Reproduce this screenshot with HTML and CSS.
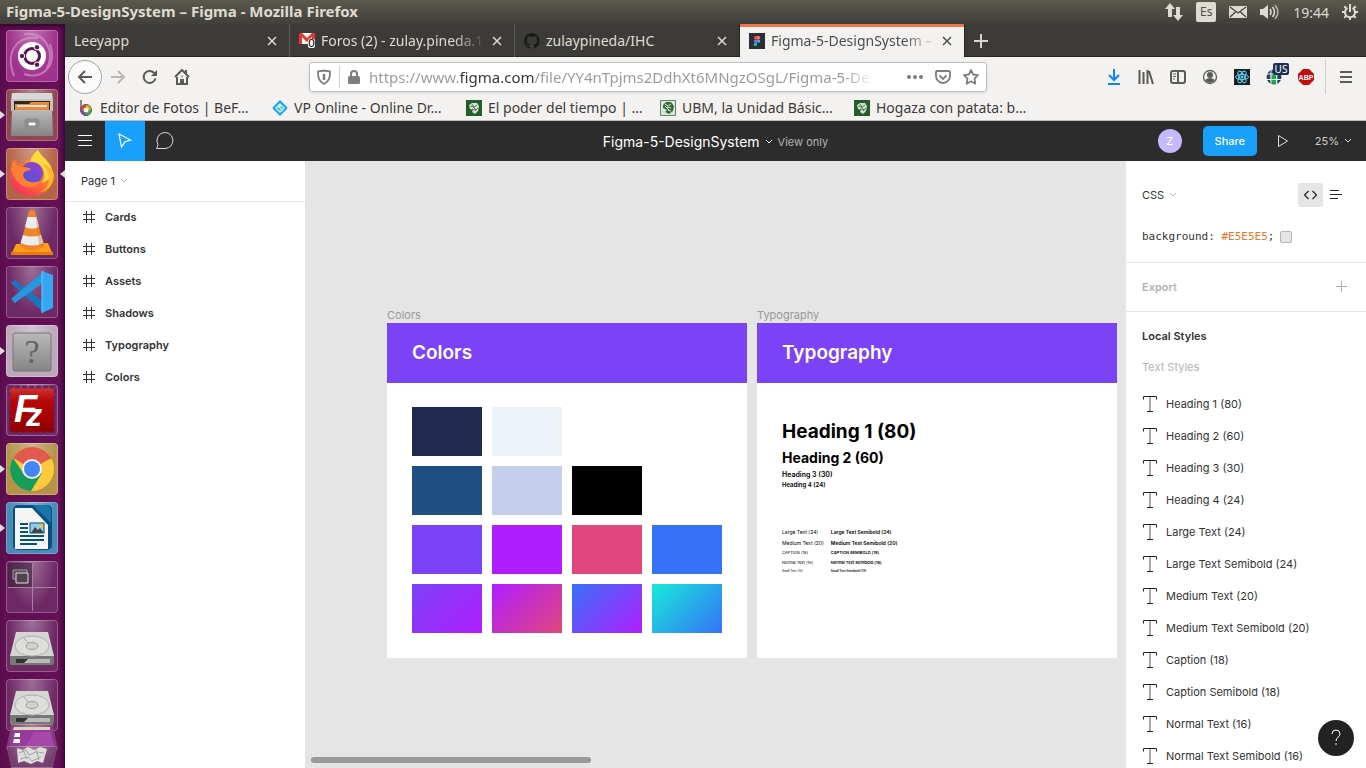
FILE: index.html
```html
<!DOCTYPE html>
<html lang="es">
<head>
<meta charset="utf-8">
<title>Figma-5-DesignSystem – Figma</title>
<link rel="stylesheet" href="styles.css">
</head>
<body>
<header class="panel">
  <span class="panel-title">Figma-5-DesignSystem – Figma - Mozilla Firefox</span>
  <div class="indicators">
    <svg width="18" height="18" viewBox="0 0 18 18" fill="#dfdbd2"><path d="M5 0l5 6H7v8H3V6H0zM13 18l-5-6h3V4h4v8h3z"/></svg>
    <span class="lang">Es</span>
    <svg width="18" height="12" viewBox="0 0 18 12"><rect width="18" height="12" rx="1" fill="#dfdbd2"/><path d="M1 1l8 6 8-6M1 11l5.500-5M17 11l-5.500-5" fill="none" stroke="#45433e" stroke-width="1.300"/></svg>
    <svg width="20" height="16" viewBox="0 0 20 16"><path d="M0 5h3l5-4v14l-5-4H0z" fill="#dfdbd2"/><g fill="none" stroke="#dfdbd2" stroke-width="1.600"><path d="M10 5q2 3 0 6M12.500 3q4 5 0 10" /><path d="M15 1q6 7 0 14" stroke="#b5b1a9"/></g></svg>
    <time>19:44</time>
    <svg width="16" height="16" viewBox="0 0 16 16" fill="none" stroke="#dfdbd2"><path d="M5.500 4a5 5 0 1 0 5 0" stroke-width="2"/><path d="M8 0v8" stroke-width="2"/><path d="M2.300 2.300l2 2M13.700 2.300l-2 2M0 8h3M16 8h-3M2.300 13.700l2-2M13.700 13.700l-2-2M8 16v-3" stroke-width="2"/></svg>
  </div>
</header>
<div class="desktop">
  <nav class="launcher" aria-label="Launcher">
    <button class="tile dash" aria-label="Dash"><svg viewBox="0 0 52 52"><path d="M8 46C-1 22 10 6 32 8M18 4c22-2 32 18 22 36M44 14c8 24-10 36-26 30" fill="none" stroke="#d9a0cd" stroke-width="2" opacity=".6"/><circle cx="26" cy="26" r="14" fill="#fff"/><circle cx="26" cy="26" r="7.500" fill="none" stroke="#5c1550" stroke-width="3"/><g fill="#5c1550" stroke="#fff"><circle cx="16" cy="26" r="2.700"/><circle cx="31" cy="17.300" r="2.700"/><circle cx="31" cy="34.700" r="2.700"/></g></svg></button>
    <button class="tile files running" aria-label="Files"><svg viewBox="0 0 52 52"><path d="M6 4h40l1 8H5z" fill="#d8d8d8"/><path d="M5 10h42v12H5z" fill="#c4c4c4"/><path d="M8 12h36v10H8z" fill="#36251c"/><path d="M9 15h14l2-2h18v9H9z" fill="#e68a42"/><path d="M11 17h30" stroke="#fff" stroke-width="1.500"/><path d="M6 21h40l1 26H5z" fill="url(#metal)"/><rect x="20" y="31" width="12" height="8" rx="2" fill="#eee" stroke="#8d8d8d" stroke-width="3"/><rect x="22" y="33" width="8" height="4" fill="#fff" stroke="#666"/></svg></button>
    <button class="tile fox running active" aria-label="Firefox"><svg viewBox="0 0 52 52"><path d="M32 2c1 4 5 6 9 11 10 12 9 33-15 35C11 48 4 38 4 26c0-5 2-10 6-15l1 4 7 1c2-4 3-5 6-5z" fill="url(#fire)"/><path d="M32 2c-6 5-8 9-7 13q8-1 12 6 4 8-2 14 10-2 11-12c0-8-10-13-14-21z" fill="#ffdb3d"/><path d="M36 16q8 7 7 16-1 9-9 12 13-2 14-17-1-9-12-11z" fill="#ffb529"/><circle cx="26" cy="25" r="11" fill="url(#globe)"/><path d="M7 12q3 7 10 7c4 0 7 1 8 2-4 3-7 1-8 6 1 6 8 9 17 6-4 8-14 9-21 2-7-6-9-14-6-23z" fill="#ff8034"/></svg></button>
    <button class="tile dark" aria-label="VLC"><svg viewBox="0 0 52 52"><path d="M10 37l32-1 5 12H5z" fill="#ff9f17"/><path d="M5 45h42v3H5z" fill="#ed7a0c"/><path d="M23 4q3-2 6 0l9 36q-12 7-24 0z" fill="#f0862a"/><path d="M21.500 10h9l2.500 10q-7 3-14 0zM17 28q9 3 18 0l2.500 8q-11 5-23 0z" fill="#e9edf0"/><path d="M29 4l4 34 5 2z" fill="#d96a12" opacity=".35"/></svg></button>
    <button class="tile dark" aria-label="Visual Studio Code"><svg viewBox="0 0 52 52"><path d="M5 17l4-3 29 22v11z" fill="#1b75bf"/><path d="M5 33l4 4 29-21V5z" fill="#2697dc"/><path d="M36 5l11 4v33l-11 5z" fill="#35a6f2"/><path d="M36 5v42" stroke="#74c7ff"/></svg></button>
    <button class="tile unknown running" aria-label="Unknown application"><svg viewBox="0 0 52 52"><rect x="7" y="8" width="38" height="38" rx="2" fill="url(#metal)" stroke="#777"/><text x="26" y="38" text-anchor="middle" class="question">?</text></svg></button>
    <button class="tile zilla" aria-label="FileZilla"><svg viewBox="0 0 52 52"><rect x="3" y="3" width="46" height="46" fill="url(#red)" stroke="#6b2563" stroke-width="3" stroke-dasharray="3 4" stroke-linecap="round"/><text x="8" y="38" class="zilla-f">F<tspan x="20" y="42" class="zilla-z">z</tspan></text></svg></button>
    <button class="tile gold running" aria-label="Chrome"><svg viewBox="0 0 52 52"><circle cx="26" cy="26" r="22" fill="#fdc93d"/><path d="M26 26L7 15A22 22 0 0 1 45 15z" fill="#e25a4d"/><path d="M7 15a22 22 0 0 0 18 33l11-18-18 1z" fill="#159d59"/><path d="M26 16h19.500L44 13H20z" fill="#e25a4d"/><circle cx="26" cy="26" r="10" fill="#f1f1f1"/><circle cx="26" cy="26" r="8" fill="#4385f4"/></svg></button>
    <button class="tile writer running" aria-label="Writer"><svg viewBox="0 0 52 52"><rect x="7" y="3" width="39" height="45" rx="5" fill="#08517e"/><path d="M9 6h17l16 17v24H9z" fill="#f5f5f5"/><path d="M27 3h11q7 0 7 7v11z" fill="#1b75aa"/><path d="M14 22h8M14 26h8M14 30h8M14 34h24M14 38h24M14 42h17" stroke="#08517e" stroke-width="2"/><rect x="24" y="21" width="14" height="10" fill="#8fcdf0" stroke="#08517e"/><path d="M25 31l4-6 3 3 2-2 4 5z" fill="#444"/><circle cx="35" cy="24" r="2" fill="#f1c232"/></svg></button>
    <button class="tile dark" aria-label="Workspaces"><svg viewBox="0 0 52 52"><path d="M2 2h24v24H2z" fill="#38203a" opacity=".6"/><path d="M2 26.500h48M26.500 2v48" fill="none" stroke="#a77e9f"/><path d="M7 9h14v9H7z" fill="#5c4b59" stroke="#a39aa2"/><path d="M10 12h12v10H10z" fill="#51424f" stroke="#ddd"/></svg></button>
    <button class="tile dark" aria-label="Disk"><svg viewBox="0 0 52 52"><use href="#drive"/></svg></button>
    <button class="tile dark" aria-label="Disk"><svg viewBox="0 0 52 52"><use href="#drive"/></svg></button>
    <button class="tile fold screen" aria-label="Removable media"><svg viewBox="0 0 52 26"><path d="M8 3h36l5 19H3z" fill="#9a3a9f"/><path d="M8 3h36v3H7z" fill="#dad5bd"/><path d="M9 9h5v4H8zM8 15h6v4H7z" fill="#fff"/><path d="M28 8h16l4 14H20z" fill="#b453b1" opacity=".5"/></svg></button>
    <button class="tile fold trash" aria-label="Trash"><svg viewBox="0 0 52 22"><path d="M11 2l6 2 5-3 6 3 6-3 7 2-4 14-6-2-6 3-7-3-6 2z" fill="#dedede"/><path d="M13 7l7-3 3 5 7-3 8 1M14 13l8-2 4 4 9-4M17 4l4 9M30 3l3 11" fill="none" stroke="#a5a5a5"/></svg></button>
  </nav>
  <div class="browser">
    <div class="tabs">
      <div class="tab"><button class="tab-name">Leeyapp</button><button class="close" aria-label="Close tab"><svg viewBox="0 0 10 10"><path d="M1 1l8 8M9 1L1 9"/></svg></button></div>
      <div class="tab"><svg width="16" height="17" viewBox="0 0 16 17"><path d="M0 1h16v11H0z" fill="#f5f5f5"/><path d="M0 12V1h3l5 5 5-5h3v11h-3V5L8 10 3 5v7z" fill="#dc3a33"/><rect x="9" y="7" width="7" height="9" rx="2" fill="#fff"/><text x="12.500" y="15" text-anchor="middle" class="mail-count">0</text></svg><button class="tab-name faded">Foros (2) - zulay.pineda.1</button><button class="close" aria-label="Close tab"><svg viewBox="0 0 10 10"><path d="M1 1l8 8M9 1L1 9"/></svg></button></div>
      <div class="tab"><svg width="16" height="16" viewBox="0 0 16 16"><path fill="#1b1b1c" d="M8 0C3.600 0 0 3.600 0 8c0 3.500 2.300 6.500 5.500 7.600.4.100.5-.2.500-.4v-1.400c-2.200.5-2.700-1-2.700-1-.4-.9-.9-1.200-.9-1.200-.7-.5.100-.5.100-.5.800.1 1.200.8 1.200.8.700 1.300 1.900.9 2.300.7.100-.5.300-.9.500-1.100-1.800-.2-3.600-.9-3.600-4 0-.9.300-1.600.8-2.200-.1-.2-.4-1 .1-2.100 0 0 .7-.2 2.200.8a7.700 7.700 0 0 1 4 0c1.500-1 2.200-.8 2.200-.8.400 1.100.2 1.900.1 2.100.5.600.8 1.300.8 2.200 0 3.100-1.900 3.700-3.700 3.900.3.300.6.800.6 1.500v2.200c0 .2.100.5.500.4A8 8 0 0 0 8 0z"/></svg><button class="tab-name">zulaypineda/IHC</button><button class="close" aria-label="Close tab"><svg viewBox="0 0 10 10"><path d="M1 1l8 8M9 1L1 9"/></svg></button></div>
      <div class="tab current"><svg width="16" height="16" viewBox="0 0 16 16"><path d="M0 0h16v16H0z" fill="#2c2d35"/><path d="M8 3H6.500a1.700 1.700 0 0 0 0 3.400H8z" fill="#f24e1e"/><path d="M8 3h1.500a1.700 1.700 0 0 1 0 3.400H8z" fill="#ff7262"/><path d="M8 6.400H6.500a1.700 1.700 0 0 0 0 3.400H8z" fill="#a259ff"/><circle cx="9.600" cy="8.100" r="1.700" fill="#1abcfe"/><path d="M8 9.800H6.500A1.700 1.700 0 1 0 8 11.500z" fill="#0acf83"/></svg><button class="tab-name faded">Figma-5-DesignSystem –</button><button class="close" aria-label="Close tab"><svg viewBox="0 0 10 10"><path d="M1 1l8 8M9 1L1 9"/></svg></button></div>
      <button class="new-tab" aria-label="New tab"><svg width="14" height="14" viewBox="0 0 14 14"><path d="M7 0v14M0 7h14" stroke="#d5d3cf" stroke-width="2"/></svg></button>
    </div>
    <div class="navbar">
      <button class="back" aria-label="Back"><svg width="16" height="16" viewBox="0 0 16 16"><path d="M15 8H2M8 2L2 8l6 6"/></svg></button>
      <button class="tool pale" aria-label="Forward"><svg width="16" height="16" viewBox="0 0 16 16"><path d="M1 8h13M8 2l6 6-6 6"/></svg></button>
      <button class="tool" aria-label="Reload"><svg width="16" height="16" viewBox="0 0 16 16"><path d="M13.500 9.500A6 6 0 1 1 12 3.700L14 6"/><path d="M15 1v6H9z" fill="#5b5b5a" stroke="none"/></svg></button>
      <button class="tool" aria-label="Home"><svg width="16" height="16" viewBox="0 0 16 16"><path d="M1 8l7-7 7 7M3 8v7h10V8"/><path d="M7 15v-4h2v4M7.500 7.500h1M12 1v4"/></svg></button>
      <div class="address">
        <svg width="16" height="16" viewBox="0 0 16 16" fill="none" stroke="#7d7d7d" stroke-width="1.800"><path d="M8 1.500l6 1c0 6-.5 9.500-6 12.500-5.500-3-6-6.500-6-12.500z"/><path d="M8 5v6" stroke-width="2.500"/></svg>
        <span class="rule"></span>
        <svg class="lock" width="14" height="16" viewBox="0 0 14 16"><rect x="1" y="7" width="12" height="8" rx="1.500" fill="#7d7d7d"/><path d="M4 8V5q0-3 3-3t3 3v3" fill="none" stroke="#7d7d7d" stroke-width="2"/></svg>
        <input class="url" aria-label="Address" value="https://www.figma.com/file/YY4nTpjms2DdhXt6MNgzOSgL/Figma-5-DesignSystem">
        <button class="mini" aria-label="Page actions"><svg width="16" height="16" viewBox="0 0 16 16" fill="#7d7d7d"><circle cx="2" cy="8" r="2"/><circle cx="8" cy="8" r="2"/><circle cx="14" cy="8" r="2"/></svg></button>
        <button class="mini" aria-label="Save to Pocket"><svg width="16" height="16" viewBox="0 0 16 16" fill="none" stroke="#7d7d7d" stroke-width="1.800"><path d="M2 2h12q1 0 1 1v4a7 7 0 0 1-14 0V3q0-1 1-1z"/><path d="M4.500 6.500L8 10l3.500-3.500"/></svg></button>
        <button class="mini" aria-label="Bookmark"><svg width="16" height="16" viewBox="0 0 16 16" fill="none" stroke="#7d7d7d" stroke-width="1.800" stroke-linejoin="round"><path d="M8 1l2.100 4.500 4.900.7-3.500 3.500.8 5L8 12.300l-4.300 2.400.8-5L1 6.200l4.900-.7z"/></svg></button>
      </div>
      <button class="tool download" aria-label="Downloads"><svg width="16" height="16" viewBox="0 0 16 16"><path d="M8 0v11M3 6l5 5 5-5M2 15h12"/></svg></button>
      <button class="tool" aria-label="Library"><svg width="16" height="16" viewBox="0 0 16 16"><path d="M1.500 1v14M5.500 3v12M9.500 1v14M11 2l4 13"/></svg></button>
      <button class="tool" aria-label="Sidebars"><svg width="16" height="16" viewBox="0 0 16 16"><rect x="1" y="2" width="14" height="12" rx="2"/><path d="M8 2v12"/><path d="M3 5h3M3 7.500h3M3 10h2" stroke-width="1"/></svg></button>
      <button class="tool" aria-label="Account"><svg width="16" height="16" viewBox="0 0 16 16"><circle cx="8" cy="8" r="6.500" stroke-width="1.300"/><circle cx="8" cy="6" r="3" fill="#5b5b5a" stroke="none"/><path d="M3 11q5-4 10 0-2 3-5 3t-5-3z" fill="#5b5b5a" stroke="none"/></svg></button>
      <button class="tool" aria-label="React Developer Tools"><svg width="16" height="16" viewBox="0 0 16 16"><path d="M0 0h16v16H0z" fill="#1b1d20" stroke="none"/><g stroke="#5ed3f3" stroke-width="1"><ellipse cx="8" cy="8" rx="6.500" ry="2.600"/><ellipse cx="8" cy="8" rx="6.500" ry="2.600" transform="rotate(60 8 8)"/><ellipse cx="8" cy="8" rx="6.500" ry="2.600" transform="rotate(120 8 8)"/></g><circle cx="8" cy="8" r="1.500" fill="#5ed3f3" stroke="none"/></svg></button>
      <button class="tool vpn" aria-label="VPN"><svg width="16" height="16" viewBox="0 0 16 16"><circle cx="8" cy="8" r="7.500" fill="#29405f" stroke="none"/><path d="M4 5h8v9l-4 1-4-2z" fill="#23a452" stroke="none"/><path d="M1 5h14M1 10.500h14M5 1v14M10.500 1v14" stroke="#e8f2ec" stroke-width="1"/></svg><span class="badge">US</span></button>
      <button class="tool" aria-label="Adblock Plus"><svg width="16" height="16" viewBox="0 0 16 16"><path d="M5 0h6l5 5v6l-5 5H5l-5-5V5z" fill="#c70d0b" stroke="none"/><text x="8" y="10.500" text-anchor="middle" class="abp">ABP</text></svg></button>
      <button class="app-menu" aria-label="Menu"><svg width="12" height="14" viewBox="0 0 12 14"><path d="M0 2h12M0 7h12M0 12h12" stroke="#5b5b5a" stroke-width="2"/></svg></button>
    </div>
    <nav class="bookmarks" aria-label="Bookmarks">
      <a href="#befunky"><svg width="16" height="16" viewBox="0 0 16 16"><path d="M3 0v9" stroke="#888" stroke-width="2"/><circle cx="8" cy="10" r="4" fill="#fff" stroke="#eab308" stroke-width="3"/><path d="M4 10a4 4 0 0 1 4-4" fill="none" stroke="#e5462f" stroke-width="3"/><path d="M12 10a4 4 0 0 1-4 4" fill="none" stroke="#42b050" stroke-width="3"/><path d="M8 14a4 4 0 0 1-4-4" fill="none" stroke="#734bbd" stroke-width="3"/><circle cx="8" cy="10" r="5.500" fill="none" stroke="#555"/></svg>Editor de Fotos | BeF…</a>
      <a href="#vp"><svg width="16" height="16" viewBox="0 0 16 16"><path d="M8 0l7 7q1 1 0 2l-7 7-7-7q-1-1 0-2z" fill="#19a8dc"/><path d="M4 8l4-4 4 4-4 4zM6 6l5 5M8 4v4" fill="none" stroke="#c8f0ff" stroke-width="1.500"/></svg>VP Online - Online Dr…</a>
      <a href="#tiempo"><svg width="16" height="16"><use href="#leaf"/></svg>El poder del tiempo | …</a>
      <a href="#ubm"><svg width="16" height="16" viewBox="0 0 16 16"><path d="M.5.5h15v15H.5z" fill="#dce7dc" stroke="#61816a"/><path d="M3 5l3-3 5 0 3 4-1 5-4 3-4-2 2-2-4-2z" fill="#356a3d"/><path d="M5 4l3 2 3-2M7 7l4 1M8 10l3 1M5 6l4 4" fill="none" stroke="#dce7dc"/></svg>UBM, la Unidad Básic…</a>
      <a href="#hogaza"><svg width="16" height="16"><use href="#leaf"/></svg>Hogaza con patata: b…</a>
    </nav>
    <main class="figma">
      <header class="toolbar">
        <div class="toolbar-left">
          <button aria-label="Main menu"><svg width="14" height="12" viewBox="0 0 14 12"><path d="M0 .5h14M0 5.500h14M0 10.500h14" stroke="#fff"/></svg></button>
          <button class="selected" aria-label="Move"><svg width="16" height="18" viewBox="0 0 16 18"><path d="M2 2l11.500 6-5.500 1.800L4.500 15z" fill="none" stroke="#fff" stroke-width="1.200"/></svg></button>
          <button aria-label="Comment"><svg width="20" height="18" viewBox="0 0 20 18"><path d="M1.500 16.500Q3 14 3 12.500A8 8 0 1 1 10 16.500z" fill="none" stroke="#ddd"/></svg></button>
        </div>
        <div class="file"><span class="file-name">Figma-5-DesignSystem</span><svg width="8" height="6" viewBox="0 0 8 6"><path d="M1 1l3 3 3-3" fill="none" stroke="#fff"/></svg><span class="view-only">View only</span></div>
        <div class="toolbar-right">
          <span class="avatar">Z</span>
          <button class="share">Share</button>
          <button class="play" aria-label="Present"><svg width="12" height="14" viewBox="0 0 12 14"><path d="M1.500 1.500l9 5.500-9 5.500z" fill="none" stroke="#ddd"/></svg></button>
          <button class="zoom">25%<svg width="8" height="6" viewBox="0 0 8 6"><path d="M1 1l3 3 3-3" fill="none" stroke="#ddd"/></svg></button>
        </div>
      </header>
      <div class="workspace">
        <aside class="layers">
          <button class="page">Page 1<svg width="8" height="6" viewBox="0 0 8 6"><path d="M1 1l3 3 3-3" fill="none" stroke="#b3b3b3"/></svg></button>
          <ul>
            <li><svg><use href="#frame"/></svg>Cards</li>
            <li><svg><use href="#frame"/></svg>Buttons</li>
            <li><svg><use href="#frame"/></svg>Assets</li>
            <li><svg><use href="#frame"/></svg>Shadows</li>
            <li><svg><use href="#frame"/></svg>Typography</li>
            <li><svg><use href="#frame"/></svg>Colors</li>
          </ul>
        </aside>
        <section class="canvas" aria-label="Canvas">
          <article class="frame">
            <span class="frame-label">Colors</span>
            <div class="artboard">
              <h2>Colors</h2>
              <div class="swatches">
                <i class="sw navy"></i><i class="sw mist"></i>
                <i class="sw steel first"></i><i class="sw peri"></i><i class="sw black"></i>
                <i class="sw violet first"></i><i class="sw magenta"></i><i class="sw rose"></i><i class="sw blue"></i>
                <i class="sw g1"></i><i class="sw g2"></i><i class="sw g3"></i><i class="sw g4"></i>
              </div>
            </div>
          </article>
          <article class="frame">
            <span class="frame-label">Typography</span>
            <div class="artboard">
              <h2>Typography</h2>
              <div class="type">
                <p class="h1">Heading 1 (80)</p>
                <p class="h2">Heading 2 (60)</p>
                <p class="h3">Heading 3 (30)</p>
                <p class="h4">Heading 4 (24)</p>
                <div class="samples">
                  <div><p class="large">Large Text (24)</p><p class="medium">Medium Text (20)</p><p class="caption">CAPTION (18)</p><p class="normal">Normal Text (16)</p><p class="small">Small Text (14)</p></div>
                  <div class="semi"><p class="large">Large Text Semibold (24)</p><p class="medium">Medium Text Semibold (20)</p><p class="caption">CAPTION SEMIBOLD (18)</p><p class="normal">Normal Text Semibold (16)</p><p class="small">Small Text Semibold (14)</p></div>
                </div>
              </div>
            </div>
          </article>
          <div class="scrollbar"></div>
        </section>
        <aside class="inspector">
          <div class="code-head">
            <label class="language"><select aria-label="Code language"><option>CSS</option><option>iOS</option></select><svg width="8" height="6" viewBox="0 0 8 6"><path d="M1 1l3 3 3-3" fill="none" stroke="#b3b3b3"/></svg></label>
            <button class="mode on" aria-label="Code"><svg width="15" height="10" viewBox="0 0 15 10"><path d="M5.500 1l-4 4 4 4M9.500 1l4 4-4 4" fill="none" stroke="#222" stroke-width="1.200"/></svg></button>
            <button class="mode" aria-label="Table"><svg width="12" height="10" viewBox="0 0 12 10"><path d="M0 .5h9M0 4.500h12M0 8.500h8" stroke="#222"/></svg></button>
          </div>
          <code class="css">background: <span class="value">#E5E5E5</span>;<i class="chip"></i></code>
          <div class="export"><span>Export</span><button aria-label="Add export"><svg width="12" height="12" viewBox="0 0 12 12"><path d="M5.500 0v11M0 5.500h11" stroke="#aaa"/></svg></button></div>
          <div class="styles">
            <h3>Local Styles</h3>
            <h4>Text Styles</h4>
            <ul>
              <li><svg><use href="#tee"/></svg>Heading 1 (80)</li>
              <li><svg><use href="#tee"/></svg>Heading 2 (60)</li>
              <li><svg><use href="#tee"/></svg>Heading 3 (30)</li>
              <li><svg><use href="#tee"/></svg>Heading 4 (24)</li>
              <li><svg><use href="#tee"/></svg>Large Text (24)</li>
              <li><svg><use href="#tee"/></svg>Large Text Semibold (24)</li>
              <li><svg><use href="#tee"/></svg>Medium Text (20)</li>
              <li><svg><use href="#tee"/></svg>Medium Text Semibold (20)</li>
              <li><svg><use href="#tee"/></svg>Caption (18)</li>
              <li><svg><use href="#tee"/></svg>Caption Semibold (18)</li>
              <li><svg><use href="#tee"/></svg>Normal Text (16)</li>
              <li><svg><use href="#tee"/></svg>Normal Text Semibold (16)</li>
            </ul>
          </div>
        </aside>
      </div>
      <button class="help" aria-label="Help"><svg width="12" height="18" viewBox="0 0 12 18"><path d="M2 5q0-4 4-4t4 4c0 3-4 3-4 7" fill="none" stroke="#fff"/><circle cx="6" cy="15" r=".8" fill="#fff"/></svg></button>
    </main>
  </div>
</div>
<svg class="defs" aria-hidden="true">
  <defs>
    <linearGradient id="metal" x2="0" y2="1"><stop stop-color="#b9b9b9"/><stop offset="1" stop-color="#858585"/></linearGradient>
    <linearGradient id="red" x2="0" y2="1"><stop stop-color="#cc3a34"/><stop offset=".3" stop-color="#b80707"/><stop offset="1" stop-color="#8f0000"/></linearGradient>
    <linearGradient id="fire" x1="1" x2=".2" y2="1"><stop stop-color="#ffd53b"/><stop offset=".5" stop-color="#ff7a2e"/><stop offset="1" stop-color="#f72a62"/></linearGradient>
    <linearGradient id="globe" x1="1" x2="0" y2="1"><stop stop-color="#a13fd2"/><stop offset="1" stop-color="#4059d8"/></linearGradient>
    <g id="drive"><path d="M10 12h32l6 24v6q-1 3-3 3H7q-3 0-3-3v-6z" fill="#d5d5d3"/><path d="M4 36h44v6q0 3-3 3H7q-3 0-3-3z" fill="#777"/><path d="M10 39h34v4H10z" fill="#bbb"/><path d="M10 39h12l-4 4h-8z" fill="#333"/><ellipse cx="26" cy="26" rx="17" ry="10" fill="#dededc" stroke="#b0b0ae"/><ellipse cx="26" cy="26" rx="6" ry="3.500" fill="#d2d2d0" stroke="#9b9b99"/><path d="M18 18l4 5" stroke="#aaa"/></g>
    <symbol id="leaf" viewBox="0 0 16 16"><path d="M0 0h16v16H0z" fill="#265c2a"/><path d="M3 5l3-2 5 0 2 3-1 5-3 3-3-2 1-2-3-1z" fill="#cfe0cf"/><path d="M4 6l4 1 3-2M6 9l4 1 2-2M6 4l4 7" fill="none" stroke="#265c2a" stroke-width=".7"/></symbol>
    <symbol id="frame" viewBox="0 0 12 12"><path d="M3.500 0v12M8.500 0v12M0 3.500h12M0 8.500h12" stroke="#333"/></symbol>
    <symbol id="tee" viewBox="0 0 14 16"><path d="M.5 3.500v-3h13v3M4 15.500h6" fill="none" stroke="#222"/><path d="M7 1v14" stroke="#555"/></symbol>
  </defs>
</svg>
</body>
</html>
```
FILE: styles.css
```css
* { box-sizing: border-box; }
body { margin: 0; height: 100vh; display: flex; flex-direction: column; overflow: hidden; font-family: "Noto Sans", sans-serif; }
button, input, select { font: inherit; color: inherit; border: 0; padding: 0; margin: 0; background: none; }
ul, h2, h3, h4, p { margin: 0; padding: 0; list-style: none; }
svg { flex: none; display: block; }
.defs { position: absolute; width: 0; height: 0; }

.panel { flex: none; height: 24px; padding: 0 8px 2px 6px; display: flex; align-items: center; justify-content: space-between; background: linear-gradient(#5b584e, #403f3a); color: #dfdbd2; }
.panel-title { font-weight: 700; font-size: 15px; line-height: 20px; }
.indicators { display: flex; align-items: center; gap: 13px; font-size: 14px; padding-top: 2px; }
.lang { background: #dfdbd2; color: #504e48; width: 20px; height: 20px; line-height: 20px; border-radius: 2px; text-align: center; font-size: 12px; }

.desktop { flex: 1; min-height: 0; display: flex; }
.launcher { width: 65px; flex: none; padding: 6px 7px 0 6px; display: flex; flex-direction: column; gap: 7px; background: linear-gradient(90deg, #5d0e50, #651058 90%, #45083d); box-shadow: inset 0 5px 5px -3px #2a0524; overflow: hidden; }
.tile { position: relative; flex: none; width: 52px; height: 52px; border-radius: 4px; box-shadow: inset 0 0 0 1px #ffffff40; background-image: radial-gradient(ellipse at 50% 0, #ffffff60, #ffffff10 65%); }
.tile svg { width: 100%; height: 100%; }
.dark { background-color: #651b5b; }
.dash { background-color: #9a2585; }
.files { background-color: #883c48; }
.fox { background-color: #b05a3c; }
.unknown { background-color: #b7a3b5; }
.zilla { background-color: #6b2563; }
.gold { background-color: #b08c3f; }
.writer { background-color: #3e82b2; }
.fold { height: 26px; margin-top: -14px; clip-path: polygon(10% 0, 90% 0, 100% 100%, 0 100%); }
.screen { background-color: #743169; }
.trash { height: 22px; margin-top: -11px; background-color: #6e3264; clip-path: polygon(0 0, 100% 0, 90% 100%, 10% 100%); }
.running::before, .active::after { content: ""; position: absolute; top: 22px; border: 4px solid transparent; }
.running::before { left: -6px; border-left: 5px solid #ddd; border-right: 0; }
.active::after { right: -7px; border-right: 5px solid #ddd; border-left: 0; }
.question { font: 34px "Liberation Serif", serif; fill: #626262; }
.zilla-f { font: italic 700 38px "Liberation Sans", sans-serif; fill: #fff; }
.zilla-z { font-size: 32px; }

.browser { flex: 1; min-width: 0; display: flex; flex-direction: column; background: #f4f2f1; }
.tabs { flex: none; height: 33px; display: flex; background: #3c3b37; box-shadow: inset 0 -1px #272622; color: #dfdbd2; font-size: 14px; }
.tab { flex: 0 1 225px; min-width: 0; display: flex; align-items: center; gap: 6px; padding: 0 12px 0 9px; border-right: 1px solid #5a5954; }
.tab:nth-child(3) { border-right-color: #272622; }
.tab-name { flex: 1; min-width: 0; overflow: hidden; white-space: nowrap; text-align: left; }
.faded { mask-image: linear-gradient(90deg, #000 80%, transparent); }
.close svg { width: 10px; height: 10px; stroke: currentColor; stroke-width: 1.5; fill: none; }
.current { background: #f4f2f1; color: #4c4c4c; border-right-color: #272622; box-shadow: inset 0 3px #f07746; }
.new-tab { width: 32px; display: grid; place-items: center; }
.mail-count { font: 11px "DejaVu Sans", sans-serif; fill: #000; }

.navbar { flex: none; height: 40px; padding-left: 3px; display: flex; align-items: center; }
.back { width: 34px; height: 34px; border: 1px solid #a5a3a1; border-radius: 50%; background: #fbfbfb; display: grid; place-items: center; }
.tool { position: relative; width: 32px; height: 32px; display: grid; place-items: center; }
.tool svg, .back svg { fill: none; stroke: #5b5b5a; stroke-width: 2; }
.pale svg { stroke: #b9b8b7; }
.download svg { stroke: #0a84ff; }
.address { flex: 1; min-width: 0; height: 30px; margin: 0 111px; padding: 0 1px 0 6px; display: flex; align-items: center; border: 1px solid #c0bebc; border-radius: 3px; background: #fff; box-shadow: 0 1px 3px #0000001a; }
.rule { width: 1px; height: 22px; margin: 0 7px; background: #ccc; }
.lock { margin-right: 8px; }
.url { flex: 1; min-width: 0; height: 28px; outline: 0; font-size: 15px; color: transparent; background: linear-gradient(90deg, #999 90px, #333 90px, #333 165px, #999 165px, #999 475px, transparent 505px); background-clip: text; }
.mini { width: 28px; height: 28px; display: grid; place-items: center; }
.badge { position: absolute; left: 15px; top: 2px; height: 12px; width: 16px; background: #1c2f55; border-radius: 2px; color: #fff; font-size: 10px; line-height: 12px; text-align: center; }
.abp { font: 700 7px "Liberation Sans", sans-serif; fill: #fff; stroke: none; }
.app-menu { width: 41px; height: 34px; margin-left: 3px; display: grid; place-items: center; border-left: 1px solid #d2d0ce; }
.bookmarks { flex: none; height: 24px; padding: 0 0 2px 13px; display: flex; align-items: center; border-bottom: 1px solid #bdbbb8; }
.bookmarks a { flex: 0 1 194px; min-width: 0; display: flex; align-items: center; gap: 6px; color: #3c3b37; text-decoration: none; white-space: nowrap; font-size: 14px; }

.figma { flex: 1; min-height: 0; display: flex; flex-direction: column; position: relative; font: 11px/16px Inter, sans-serif; color: #333; }
.toolbar { flex: none; height: 40px; display: grid; grid-template-columns: 1fr auto 1fr; background: #2c2c2c; color: #fff; }
.toolbar-left, .toolbar-right, .file { display: flex; align-items: center; }
.toolbar-left button { width: 40px; height: 40px; display: grid; place-items: center; }
.toolbar-left .selected { background: #18a0fb; }
.file { gap: 5px; padding-top: 2px; }
.file-name { font-size: 14px; }
.view-only { color: #b3b3b3; }
.toolbar-right { justify-content: flex-end; padding-right: 14px; }
.avatar { width: 24px; height: 24px; border-radius: 50%; background: #c7b9ff; text-align: center; line-height: 24px; }
.share { width: 54px; height: 30px; margin-left: 21px; border-radius: 5px; background: #18a0fb; font-weight: 500; }
.play { width: 52px; height: 40px; display: grid; place-items: center; }
.zoom { display: flex; align-items: center; gap: 5px; margin-left: 6px; color: #ccc; }

.workspace { flex: 1; min-height: 0; display: flex; }
.layers { flex: none; width: 241px; background: #fff; border-right: 1px solid #e5e5e5; }
.page { width: 100%; height: 41px; padding-left: 16px; display: flex; align-items: center; gap: 5px; border-bottom: 1px solid #e5e5e5; }
.layers ul { margin-top: -1px; }
.layers li { height: 32px; display: flex; align-items: center; gap: 10px; padding-left: 18px; font-weight: 600; }
.layers li svg { width: 12px; height: 12px; }

.canvas { position: relative; flex: 1; min-width: 0; overflow: hidden; display: flex; gap: 10px; align-items: flex-start; padding: 146px 9px 0 81px; background: #e5e5e5; }
.frame { flex: none; width: 360px; }
.frame-label { display: block; color: #999; }
.artboard { height: 335px; background: #fff; color: #000; }
.artboard h2 { padding: 0 25px; background: #7b42f6; color: #fff; font: 600 19px/60px Inter, sans-serif; }
.swatches { display: grid; grid-template-columns: repeat(4, 70px); grid-auto-rows: 49px; gap: 10px; padding: 24px 25px; }
.first { grid-column: 1; }
.navy { background: #212b4f; }
.mist { background: #edf2f7; }
.steel { background: #205081; }
.peri { background: #c5cfec; }
.black { background: #000; }
.violet { background: #7b42f6; }
.magenta { background: #b01eff; }
.rose { background: #e1467c; }
.blue { background: #3672f8; }
.g1 { background: linear-gradient(135deg, #7b42f6, #b01eff); }
.g2 { background: linear-gradient(135deg, #b01eff, #e1467c); }
.g3 { background: linear-gradient(135deg, #3672f8, #b01eff); }
.g4 { background: linear-gradient(135deg, #17ead9, #3672f8); }
.type { padding: 35px 25px; }
.h1 { font: 700 19px/28px Inter, sans-serif; }
.h2 { font: 700 14px/24px Inter, sans-serif; }
.h3 { font: 600 7px/10px Inter, sans-serif; }
.h4 { font: 600 6px/10px Inter, sans-serif; }
.samples { display: flex; gap: 7px; padding-top: 36px; }
.samples p { line-height: 10px; white-space: nowrap; }
.semi { font-weight: 600; }
.samples .large { font-size: 5px; line-height: 12px; }
.medium { font-size: 5px; }
.caption, .normal { font-size: 4px; }
.samples .small { font-size: 3px; line-height: 7px; }
.scrollbar { position: absolute; left: 5px; bottom: 5px; width: 280px; height: 6px; border-radius: 3px; background: #999; }

.inspector { flex: none; width: 240px; background: #fff; overflow: hidden; }
.code-head { height: 68px; padding: 0 18px 0 16px; display: flex; align-items: center; }
.language { flex: 1; display: flex; align-items: center; gap: 5px; }
.language select { appearance: none; width: 22px; }
.mode { width: 25px; height: 24px; display: grid; place-items: center; border-radius: 2px; }
.mode.on { background: #e5e5e5; }
.css { height: 33px; padding-left: 16px; display: flex; align-items: flex-start; font: 11px/16px "DejaVu Sans Mono", monospace; white-space: pre; }
.value { color: #f2741f; }
.chip { width: 12px; height: 12px; margin: 2px 0 0 6px; border: 1px solid #b3b3b3; border-radius: 2px; background: #e5e5e5; }
.export { height: 50px; padding: 0 18px 0 16px; display: flex; align-items: center; justify-content: space-between; border: solid #e5e5e5; border-width: 1px 0; color: #b3b3b3; font-weight: 600; }
.styles { padding: 16px 16px 0; }
.styles h3 { font-size: 11px; font-weight: 600; }
.styles h4 { margin: 15px 0 13px; font-size: 11px; font-weight: 400; color: #b3b3b3; }
.styles li { height: 32px; display: flex; align-items: center; gap: 9px; padding-left: 1px; }
.styles li svg { width: 14px; height: 16px; }
.help { position: absolute; right: 12px; bottom: 12px; width: 36px; height: 36px; border-radius: 50%; background: #222; display: grid; place-items: center; }
```
